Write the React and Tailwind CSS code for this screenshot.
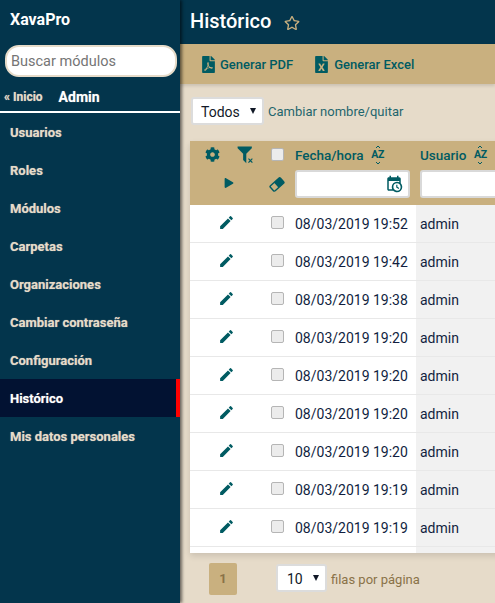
import { FaCog, FaFileExcel, FaFilePdf, FaPlay, FaRegStar } from "react-icons/fa";
import { MdEdit } from "react-icons/md";

const menu = ["Usuarios", "Roles", "Módulos", "Carpetas", "Organizaciones", "Cambiar contraseña", "Configuración", "Histórico", "Mis datos personales"];

const rows = ["19:52", "19:42", "19:38", "19:20", "19:20", "19:20", "19:20", "19:19", "19:19"];

const SortIcon = () => (
  <span className="relative ml-[7px] inline-flex h-[16px] w-[14px] items-center justify-center text-[10.5px] font-bold leading-none tracking-[-0.3px]">
    AZ
    <svg className="absolute left-[4px] top-[-2px]" width="6" height="4" viewBox="0 0 6 4" fill="none" stroke="currentColor" strokeWidth="1">
      <path d="M1 3L3 1L5 3" />
    </svg>
    <svg className="absolute bottom-[-2px] left-[4px]" width="6" height="4" viewBox="0 0 6 4" fill="none" stroke="currentColor" strokeWidth="1">
      <path d="M1 1L3 3L5 1" />
    </svg>
  </span>
);

const FilterRemove = () => (
  <svg width="19" height="19" viewBox="0 0 24 24" fill="currentColor">
    <path d="M2 2H20V4H19.9L13 10.9V22.9L9 18.9V10.9L2.1 4H2Z" />
    <path d="M15.2 17.7L16.2 16.7L18.2 18.7L20.2 16.7L21.2 17.7L19.2 19.7L21.2 21.7L20.2 22.7L18.2 20.7L16.2 22.7L15.2 21.7L17.2 19.7Z" />
  </svg>
);

const CalendarClock = () => (
  <svg width="18" height="18" viewBox="0 0 24 24" fill="currentColor">
    <path d="M15,13H16.5V15.82L18.94,17.23L18.19,18.53L15,16.69V13M19,8H5V19H9.67C9.24,18.09 9,17.07 9,16A7,7 0 0,1 16,9C17.07,9 18.09,9.24 19,9.67V8M5,21C3.89,21 3,20.1 3,19V5C3,3.89 3.89,3 5,3H6V1H8V3H16V1H18V3H19A2,2 0 0,1 21,5V11.1C22.24,12.36 23,14.09 23,16A7,7 0 0,1 16,23C14.09,23 12.36,22.24 11.1,21H5M16,11.15A4.85,4.85 0 0,0 11.15,16C11.15,18.68 13.32,20.85 16,20.85A4.85,4.85 0 0,0 20.85,16C20.85,13.32 18.68,11.15 16,11.15Z" />
  </svg>
);

const Eraser = () => (
  <svg width="16" height="15" viewBox="0 0 16 15">
    <g transform="rotate(-42 8 7.5)">
      <rect x="1.2" y="4" width="13.6" height="7" rx="1.2" fill="none" stroke="currentColor" strokeWidth="1.4" />
      <path d="M7 4H13.6A1.2 1.2 0 0 1 14.8 5.2V9.8A1.2 1.2 0 0 1 13.6 11H7Z" fill="currentColor" />
    </g>
  </svg>
);

const Checkbox = () => (
  <span className="block h-[13px] w-[13px] rounded-[2px] border border-[#b5b5b5] bg-[#ececec]" />
);

const SelectBox = ({ label, className }) => (
  <div className={`flex items-center justify-between rounded-[3px] border-2 border-[#dcdcdc] bg-white text-[#111827] ${className}`}>
    <span className="pt-[2px]">{label}</span>
    <span className="mb-[1px] h-0 w-0 border-x-[3.5px] border-t-[6px] border-x-transparent border-t-[#111827]" />
  </div>
);

export default function App() {
  return (
    <div className="flex h-[603px] w-[495px] overflow-hidden bg-[#e6dbc9] font-['Roboto',sans-serif]">
      {/* Sidebar */}
      <aside className="z-10 h-full w-[180px] shrink-0 bg-[#03354c] shadow-[2px_0_3px_rgba(0,0,0,0.55)]">
        <div className="px-[10px] pt-[11px] text-[16px] font-bold leading-[18px] text-white">XavaPro</div>
        <div className="mx-[5px] mt-[16px] flex h-[32px] w-[172px] items-center rounded-[14px] border-2 border-[#e6dbc9] bg-white px-[4px] pt-[1px] text-[14.5px] text-[#757575]">
          Buscar módulos
        </div>
        <div className="flex h-[36px] items-center border-b-2 border-white pt-[6px] [text-shadow:0_0_1px_rgba(230,219,201,0.6)]">
          <span className="ml-[4px] text-[12px] font-bold text-[#e6dbc9]">« Inicio</span>
          <span className="ml-[16px] text-[14px] font-bold text-white">Admin</span>
        </div>
        <nav>
          {menu.map((item) => {
            const active = item === "Histórico";
            return (
              <div
                key={item}
                className={`flex h-[38px] items-center pl-[10px] pt-[1px] text-[13px] font-bold [text-shadow:0_0_1px_rgba(230,219,201,0.6)] ${active ? "border-r-[4px] border-[#ff0000] bg-[#021232] text-white" : "text-[#e6dbc9]"}`}
              >
                {item}
              </div>
            );
          })}
        </nav>
      </aside>

      {/* Main */}
      <main className="min-w-0 flex-1">
        <header className="flex h-[44px] items-center bg-[#03354c] pb-[3px] pl-[10px] text-white">
          <h1 className="text-[20px] font-medium leading-none">Histórico</h1>
          <FaRegStar className="ml-[13px] mt-[5px] text-[16px] text-[#c9b07f]" />
        </header>

        <div className="flex h-[40px] items-center bg-[#c9b07f] pl-[20px] pt-[1px] text-[13px] font-medium text-[#005b62] shadow-[0_2px_3px_rgba(0,0,0,0.12)]">
          <FaFilePdf className="text-[17px]" />
          <span className="ml-[3px]">Generar PDF</span>
          <FaFileExcel className="ml-[20px] text-[17px]" />
          <span className="ml-[4px]">Generar Excel</span>
        </div>

        <div className="flex items-center pl-[11px] pt-[13px]">
          <SelectBox label="Todos" className="h-[28px] w-[73px] pl-[8px] pr-[6px] text-[14px]" />
          <span className="ml-[4px] pt-[2px] text-[13px] text-[#1f666d]">Cambiar nombre/quitar</span>
        </div>

        {/* Table */}
        <div className="ml-[10px] mt-[16px] w-[315px] rounded-t-[3px] bg-white shadow-[0_3px_6px_rgba(0,0,0,0.12)]">
          <div className="grid h-[64px] grid-cols-[81px_19px_126px_89px] bg-[#c9b07f] text-[#005b62]">
            <div className="flex flex-col pt-[4px]">
              <div className="flex items-center">
                <FaCog className="ml-[15px] text-[15px]" />
                <span className="ml-[16px]"><FilterRemove /></span>
              </div>
              <FaPlay className="ml-[34px] mt-[14px] text-[10px]" />
            </div>
            <div className="flex flex-col items-start pt-[7px]">
              <Checkbox />
              <span className="ml-[-2px] mt-[16px] block"><Eraser /></span>
            </div>
            <div className="flex flex-col pl-[5px] pt-[6px]">
              <div className="flex h-[16px] items-center text-[13.5px] font-medium">
                Fecha/hora
                <SortIcon />
              </div>
              <div className="mt-[7px] flex h-[28px] w-[115px] items-center justify-end rounded-[3px] border-2 border-[#d9d9d9] bg-white pr-[5px]">
                <CalendarClock />
              </div>
            </div>
            <div className="flex flex-col pl-[4px] pt-[6px]">
              <div className="flex h-[16px] items-center text-[13.5px] font-medium">
                Usuario
                <SortIcon />
              </div>
              <div className="mt-[7px] h-[28px] w-[85px] rounded-l-[3px] border-y-2 border-l-2 border-[#d9d9d9] bg-white" />
            </div>
          </div>

          {rows.map((time, i) => (
            <div key={i} className="grid h-[38px] grid-cols-[81px_19px_126px_89px] border-b border-[#e8e8e8] text-[14px] text-[#111f3f]">
              <div className="flex items-center pb-[3px] pl-[28px] text-[#005b62]">
                <MdEdit className="text-[17px]" />
              </div>
              <div className="flex items-center pb-[3px]">
                <Checkbox />
              </div>
              <div className="flex items-center pl-[5px] pt-[2px]">08/03/2019 {time}</div>
              <div className="flex items-center bg-[#f1f1f1] pl-[4px] pt-[2px]">admin</div>
            </div>
          ))}
          <div className="grid h-[6px] grid-cols-[226px_89px]">
            <div />
            <div className="bg-[#f1f1f1]" />
          </div>
        </div>

        {/* Pagination */}
        <div className="flex items-center pl-[29px] pt-[10px]">
          <div className="flex h-[32px] w-[28px] items-center justify-center rounded-[2px] bg-[#c9b07f] text-[13px] font-bold text-[#8a7248]">1</div>
          <SelectBox label="10" className="mb-[2px] ml-[39px] h-[28px] w-[51px] pl-[9px] pr-[6px] text-[14px]" />
          <span className="ml-[4px] pt-[1px] text-[13px] text-[#8a7248]">filas por página</span>
        </div>
      </main>
    </div>
  );
}
